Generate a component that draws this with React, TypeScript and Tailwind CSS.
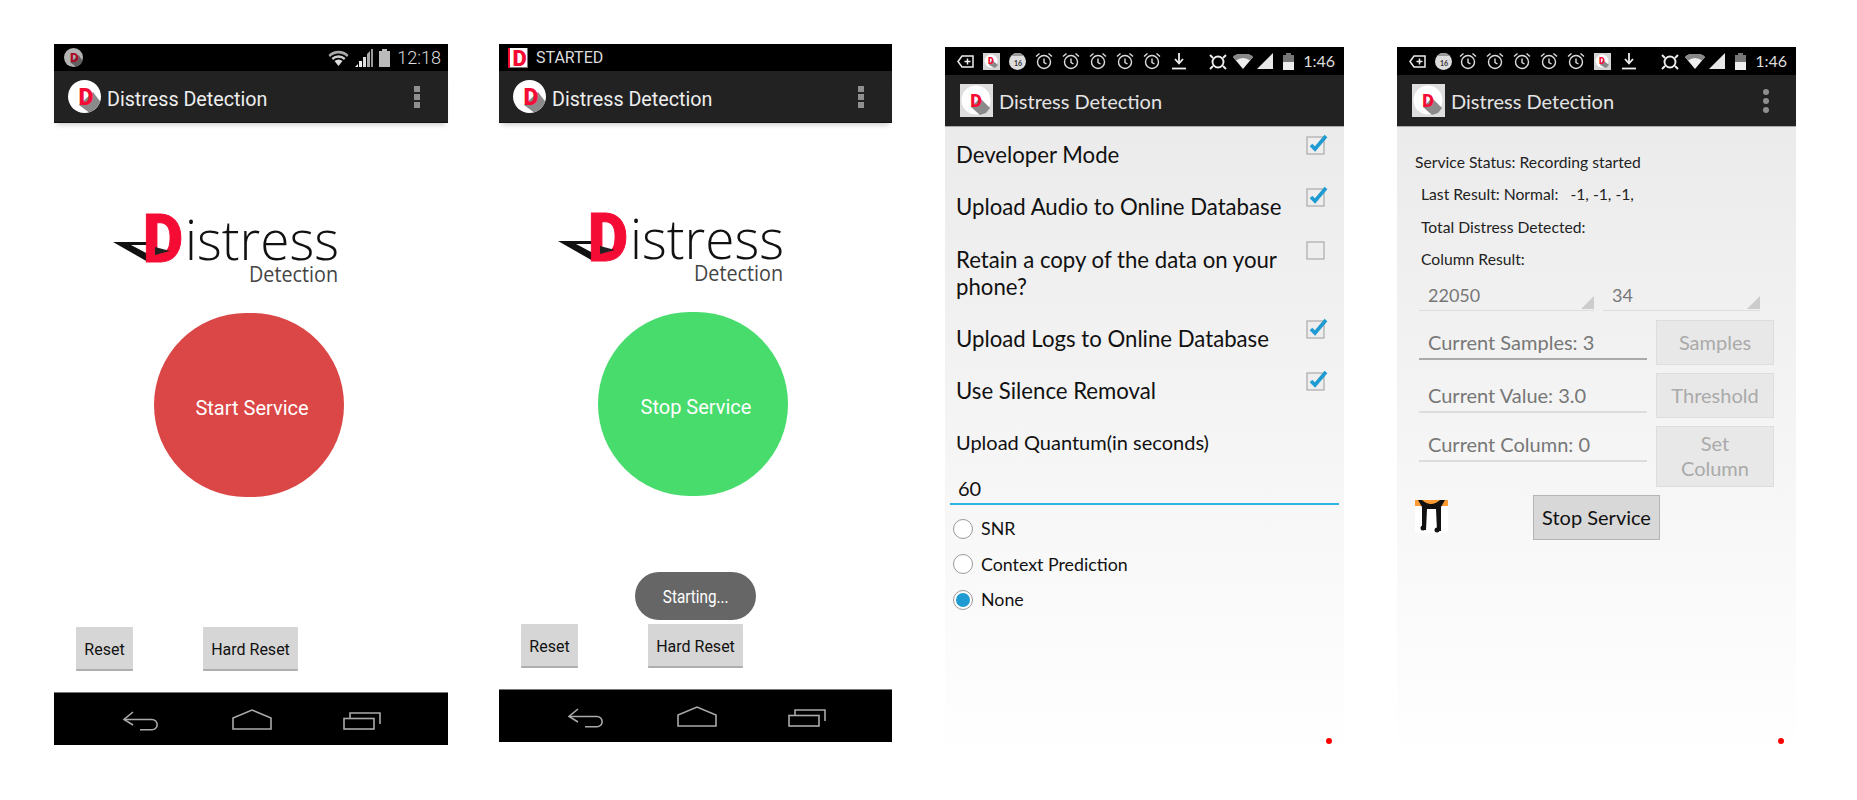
import type { ReactNode } from 'react';

const RoundIcon = ({ className = '' }: { className?: string }) => (
    <svg viewBox="0 0 33 33" className={className}>
        <circle cx="16.5" cy="16.5" r="16.5" fill="#fff" />
        <path d="M25 12 L32.2 21.5 A16.5 16.5 0 0 1 21 32.4 L11 25 Z" fill="#8a8a8a" />
        <text x="18" y="25" textAnchor="middle" fontSize="23" fontWeight="900" fill="#f50c35" className="font-['Roboto',sans-serif]">
            D
        </text>
    </svg>
);

const SquareIcon = ({ className = '' }: { className?: string }) => (
    <svg viewBox="0 0 33 33" className={className}>
        <rect width="33" height="33" fill="#dedede" />
        <circle cx="16" cy="16" r="14.5" fill="#fff" />
        <path d="M20 14 L30 24 L26 29 L20 31 L11 23 Z" fill="#8a8a8a" />
        <text x="16" y="23" textAnchor="middle" fontSize="18" fontWeight="900" fill="#f50c35" className="font-['Roboto',sans-serif]">
            D
        </text>
    </svg>
);

const StartedIcon = () => (
    <svg viewBox="0 0 20 20" className="w-5 h-5">
        <rect width="20" height="20" fill="#777" />
        <rect width="19" height="19" fill="#fff" />
        <rect x="0" width="2" height="20" fill="#f50c35" />
        <text x="11.5" y="18" textAnchor="middle" fontSize="22" fontWeight="900" fill="#f50c35" className="font-['Roboto',sans-serif]">
            D
        </text>
    </svg>
);

const Logo = ({ className = '' }: { className?: string }) => (
    <svg viewBox="0 0 240 75" className={`w-[240px] h-[75px] ${className}`}>
        <path d="M3 30 L38 30 L38 50 Z" fill="#111" />
        <path d="M21 33 L38 33 L38 42 Z" fill="#fff" />
        <text x="33" y="50" fontSize="66" fontWeight="900" fill="#f50c35" stroke="#f50c35" strokeWidth="1" textLength="40" lengthAdjust="spacingAndGlyphs" className="font-['Roboto',sans-serif]">
            D
        </text>
        <path d="M45 35 L60 39 L45 43 Z" fill="#222" />
        <text x="75" y="48" fontSize="55" fontWeight="300" fill="#111" textLength="154" lengthAdjust="spacingAndGlyphs" className="font-['Open_Sans',sans-serif]">
            istress
        </text>
        <text x="139" y="70" fontSize="21" fontWeight="400" fill="#444" textLength="89" lengthAdjust="spacingAndGlyphs" className="font-['Open_Sans',sans-serif]">
            Detection
        </text>
    </svg>
);

const WifiFan = () => (
    <svg viewBox="0 0 21 16" className="w-[21px] h-4">
        <path d="M0.5 5 A14 14 0 0 1 20.5 5 L19 7 A12 12 0 0 0 2 7 Z" fill="#aaa" />
        <path d="M3.5 8 A10 10 0 0 1 17.5 8 L16 10 A8 8 0 0 0 5 10 Z" fill="#ccc" />
        <path d="M6.5 11 A6 6 0 0 1 14.5 11 L10.5 16 Z" fill="#ddd" />
    </svg>
);

const SignalBars = () => (
    <svg viewBox="0 0 18 18" className="w-[18px] h-[18px]">
        <path d="M0 18 L3 15 V18 Z" fill="#eee" />
        <rect x="4" y="12" width="3" height="6" fill="#eee" />
        <rect x="8" y="8" width="3" height="10" fill="#ddd" />
        <path d="M12 5 L15 2 V18 H12 Z" fill="#aaa" />
        <rect x="16" y="0" width="2" height="18" fill="#999" />
    </svg>
);

const TopBar = ({ icon, title, titleClass = '', dots, className = '' }: { icon: ReactNode; title: string; titleClass?: string; dots: ReactNode; className?: string }) => (
    <div className={`h-[52px] bg-[#222222] flex items-center ${className}`}>
        {icon}
        <span className={`flex-1 ${titleClass}`}>{title}</span>
        {dots}
    </div>
);

const SquareDots = ({ className = '' }: { className?: string }) => (
    <div className={`flex flex-col gap-[2px] ${className}`}>
        <div className="w-1.5 h-1.5 bg-[#8f8f8f]" />
        <div className="w-1.5 h-1.5 bg-[#8f8f8f]" />
        <div className="w-1.5 h-1.5 bg-[#8f8f8f]" />
    </div>
);

const NavBar = () => (
    <div className="h-[53px] bg-black border-t border-[#777] flex items-start pl-[69px]">
        <svg viewBox="0 0 38 20" className="w-[38px] h-5 mt-[18px]" fill="none" stroke="#aaa" strokeWidth="1.6">
            <path d="M10 1 L1 8.5 L10 14" />
            <path d="M1 8.5 H29 A5 5 0 0 1 29 18.8 H17" />
        </svg>
        <svg viewBox="0 0 40 21" className="w-10 h-[21px] mt-4 ml-[71px]" fill="none" stroke="#aaa" strokeWidth="1.6">
            <path d="M1 20 V9 L20 1 L39 9 V20 Z" />
        </svg>
        <svg viewBox="0 0 38 19" className="w-[38px] h-[19px] mt-[18px] ml-[71px]" fill="none" stroke="#aaa" strokeWidth="1.6">
            <rect x="1" y="7.5" width="30" height="10.5" />
            <path d="M7 7 V2 H37 V13" />
        </svg>
    </div>
);

const GreyButton = ({ label, className = '' }: { label: string; className?: string }) => (
    <button className={`h-11 pt-1 bg-[#d6d6d6] border-b-2 border-[#aeaeae] rounded-[1px] text-[16px] text-[#111] font-['Roboto',sans-serif] ${className}`}>
        {label}
    </button>
);

const ServiceScreen = ({
    status,
    logoClass,
    label,
    circleClass,
    buttonsClass,
    heightClass,
    toast,
}: {
    status: ReactNode;
    logoClass: string;
    label: string;
    circleClass: string;
    buttonsClass: string;
    heightClass: string;
    toast?: boolean;
}) => (
    <div className={`relative flex flex-col bg-white font-['Roboto',sans-serif] ${heightClass}`}>
        <div className="h-[27px] bg-black flex items-center">{status}</div>
        <TopBar
            className="pl-3.5 text-[19.7px] text-[#eeeeee] shadow-[0_5px_5px_-3px_rgba(0,0,0,0.2)] border-b border-[#111]"
            titleClass="pt-1.5"
            icon={<RoundIcon className="w-[33px] h-[33px] mr-1.5" />}
            title="Distress Detection"
            dots={<SquareDots className="mr-7" />}
        />
        <Logo className={logoClass} />
        <div className={`w-[190px] h-[184px] rounded-full flex items-center justify-center pl-[6px] pt-[5px] text-white text-[20px] mt-[26px] ${circleClass}`}>
            {label}
        </div>
        {toast && (
            <div className="absolute left-[136px] top-[528px] w-[121px] h-12 rounded-full bg-[#666666] text-white text-[18px] flex items-center justify-center">
                <span className="scale-x-85">Starting...</span>
            </div>
        )}
        <div className={`flex pl-[22px] gap-[70px] ${buttonsClass}`}>
            <GreyButton label="Reset" className="w-[57px]" />
            <GreyButton label="Hard Reset" className="w-[95px]" />
        </div>
        <div className="mt-[21px]">
            <NavBar />
        </div>
    </div>
);

const TagIcon = () => (
    <svg viewBox="0 0 17 17" className="w-[17px] h-[17px]" fill="none" stroke="#eee" strokeWidth="1.5">
        <path d="M5 3 H16 V14 H5 L1 8.5 Z" />
        <path d="M10.5 5.5 V11.5 M7.5 8.5 H13.5" />
    </svg>
);

const BadgeIcon = () => (
    <svg viewBox="0 0 17 17" className="w-[17px] h-[17px]">
        <circle cx="8.5" cy="8.5" r="8.5" fill="#ddd" />
        <path d="M2 3 A8.5 8.5 0 0 1 15 3 Z" fill="#999" />
        <text x="9" y="13" textAnchor="middle" fontSize="7" fontWeight="700" fill="#333" className="font-['Lato',sans-serif]">
            16
        </text>
    </svg>
);

const ClockIcon = () => (
    <svg viewBox="0 0 18 18" className="w-[18px] h-[18px]" fill="none" stroke="#ddd" strokeWidth="1.4">
        <circle cx="9" cy="10" r="6.5" />
        <path d="M9 6.5 V10.5 L11.5 12" />
        <path d="M1 4.5 L4.5 1.5 M17 4.5 L13.5 1.5" />
    </svg>
);

const DownloadIcon = () => (
    <svg viewBox="0 0 18 18" className="w-[18px] h-[18px]" fill="none" stroke="#eee" strokeWidth="1.8">
        <path d="M9 1 V10" />
        <path d="M5 7 L9 11.5 L13 7" />
        <path d="M2 16.5 H16" />
    </svg>
);

const DIcon = () => (
    <svg viewBox="0 0 17 17" className="w-[17px] h-[17px]">
        <rect width="17" height="17" fill="#d4d4d4" />
        <circle cx="8" cy="8" r="6.5" fill="#fff" />
        <path d="M9 7 L15 12 L12 15 L6 12 Z" fill="#888" />
        <text x="8" y="11" textAnchor="middle" fontSize="9" fontWeight="900" fill="#f50c35" className="font-['Roboto',sans-serif]">
            D
        </text>
    </svg>
);

const StatusRight = () => (
    <div className="flex items-center ml-auto pr-[9px]">
        <svg viewBox="0 0 20 17" className="w-5 h-[17px]" fill="none" stroke="#eee" strokeWidth="1.9">
            <circle cx="10" cy="9" r="5.5" />
            <path d="M2 2 L5 5 M18 2 L15 5 M2 16 L5 13 M18 16 L15 13" />
        </svg>
        <svg viewBox="0 0 20 15" className="w-5 h-[15px] ml-[5px]">
            <path d="M0 3 A15 15 0 0 1 20 3 L10 15 Z" fill="#eee" />
            <path d="M0 3 A15 15 0 0 1 20 3 L17 6.5 A11 11 0 0 0 3 6.5 Z" fill="#888" />
        </svg>
        <svg viewBox="0 0 16 16" className="w-4 h-4 ml-1">
            <path d="M0 16 L16 0 V16 Z" fill="#e8e8e8" />
        </svg>
        <svg viewBox="0 0 11 17" className="w-[11px] h-[17px] ml-[10px]">
            <rect x="3" y="0" width="5" height="2" fill="#777" />
            <rect x="0" y="2" width="11" height="7" fill="#777" />
            <rect x="0" y="9" width="11" height="8" fill="#eee" />
        </svg>
        <span className="ml-[9px] text-[16px] leading-none text-[#dddddd]">1:46</span>
    </div>
);

const SettingsFrame = ({ icons, dots, children }: { icons: ReactNode; dots?: boolean; children: ReactNode }) => (
    <div className="relative h-[713px] flex flex-col font-['Lato',sans-serif]">
        <div className="h-7 bg-black flex items-center pl-3 gap-[9px]">
            {icons}
            <StatusRight />
        </div>
        <TopBar
            className="pl-[15px] text-[20px] text-[#e4e4e4] border-b border-[#aaa]"
            icon={<SquareIcon className="w-[33px] h-[33px] mr-1.5" />}
            title="Distress Detection"
            dots={
                dots ? (
                    <div className="flex flex-col gap-[3px] mr-[27px]">
                        <div className="w-1.5 h-1.5 rounded-full bg-[#8f8f8f]" />
                        <div className="w-1.5 h-1.5 rounded-full bg-[#8f8f8f]" />
                        <div className="w-1.5 h-1.5 rounded-full bg-[#8f8f8f]" />
                    </div>
                ) : null
            }
        />
        <div className="flex-1 bg-gradient-to-b from-[#ebebeb] to-white">{children}</div>
        <div className="absolute left-[381px] top-[691px] w-[6px] h-[6px] rounded-full bg-[#ff0000]" />
    </div>
);

const CheckBox = ({ checked }: { checked: boolean }) => (
    <svg viewBox="0 0 20 20" className="w-5 h-5 -mt-[7px] shrink-0 overflow-visible">
        <rect x="1" y="3" width="17" height="17" fill="#eeeeee" stroke="#aaa" strokeWidth="1.2" />
        {checked && <path d="M5 11 L9 15 L20 2" fill="none" stroke="#1f9bd1" strokeWidth="3.6" />}
    </svg>
);

const CheckRow = ({ label, checked, className }: { label: string; checked: boolean; className: string }) => (
    <div className={`flex justify-between items-start pl-[11px] pr-[18px] text-[22.2px] leading-[27px] text-[#111] ${className}`}>
        <span className="w-[330px]">{label}</span>
        <CheckBox checked={checked} />
    </div>
);

const RadioRow = ({ label, checked }: { label: string; checked?: boolean }) => (
    <div className="h-[35.5px] flex items-center pl-2 text-[17.8px] text-[#111]">
        <div className="w-5 h-5 rounded-full border border-[#999] bg-white flex items-center justify-center mr-[8px]">
            {checked && <div className="w-3.5 h-3.5 rounded-full bg-[#1f9bd1]" />}
        </div>
        {label}
    </div>
);

const SettingsScreen = () => (
    <SettingsFrame
        icons={
            <>
                <TagIcon />
                <DIcon />
                <BadgeIcon />
                <ClockIcon />
                <ClockIcon />
                <ClockIcon />
                <ClockIcon />
                <ClockIcon />
                <DownloadIcon />
            </>
        }
    >
        <div className="pt-[14px]">
            <CheckRow label="Developer Mode" checked className="h-[52px]" />
            <CheckRow label="Upload Audio to Online Database" checked className="h-[53px]" />
            <CheckRow label="Retain a copy of the data on your phone?" checked={false} className="h-[79px]" />
            <CheckRow label="Upload Logs to Online Database" checked className="h-[52px]" />
            <CheckRow label="Use Silence Removal" checked className="h-[52px]" />
            <div className="pl-[11px] text-[20px] leading-[27px] text-[#111] h-[46px]">Upload Quantum(in seconds)</div>
            <div className="mx-[5px] h-[30px] border-b-2 border-[#29b6e0] pl-[8px] text-[20px] leading-[27px] text-[#111]">60</div>
            <div className="mt-[6px]">
                <RadioRow label="SNR" />
                <RadioRow label="Context Prediction" />
                <RadioRow label="None" checked />
            </div>
        </div>
    </SettingsFrame>
);

const Spinner = ({ value, className }: { value: string; className: string }) => (
    <div className={`relative h-[35px] border-b border-[#dddddd] pl-[9px] pt-[7px] text-[18px] leading-[24px] text-[#777] ${className}`}>
        {value}
        <div className="absolute right-0 bottom-[1px] w-0 h-0 border-l-[13px] border-b-[13px] border-l-transparent border-b-[#cccccc]" />
    </div>
);

const ValueInput = ({ label, className }: { label: string; className: string }) => (
    <div className={`w-[228px] flex items-end pl-[9px] pb-1 text-[20px] leading-6 text-[#777] ${className}`}>{label}</div>
);

const DisabledButton = ({ label, className }: { label: string; className: string }) => (
    <button className={`w-[118px] bg-[#e8e8e8] border border-[#dddddd] text-[20px] leading-[25px] text-[#aaaaaa] ${className}`}>{label}</button>
);

const StatusScreen = () => (
    <SettingsFrame
        dots
        icons={
            <>
                <TagIcon />
                <BadgeIcon />
                <div className="-ml-0.5 flex gap-[9px]">
                    <ClockIcon />
                    <ClockIcon />
                    <ClockIcon />
                    <ClockIcon />
                    <ClockIcon />
                </div>
                <DIcon />
                <DownloadIcon />
            </>
        }
    >
        <div className="pt-[19px] text-[15.7px] leading-[32.4px] text-[#222]">
            <div className="pl-[18px]">Service Status: Recording started</div>
            <div className="pl-6">Last Result: Normal: &nbsp; -1, -1, -1,</div>
            <div className="pl-6">Total Distress Detected:</div>
            <div className="pl-6">Column Result:</div>
        </div>
        <div className="flex gap-[9px] ml-[22px]">
            <Spinner value="22050" className="w-[175px]" />
            <Spinner value="34" className="w-[157px]" />
        </div>
        <div className="flex flex-col gap-2 ml-[22px] mt-[9px]">
            <div className="flex items-start gap-[9px]">
                <ValueInput label="Current Samples: 3" className="h-10 border-b-2 border-[#aaaaaa]" />
                <DisabledButton label="Samples" className="h-[45px]" />
            </div>
            <div className="flex items-start gap-[9px]">
                <ValueInput label="Current Value: 3.0" className="h-10 border-b-2 border-[#dddddd]" />
                <DisabledButton label="Threshold" className="h-[45px]" />
            </div>
            <div className="flex items-start gap-[9px]">
                <ValueInput label="Current Column: 0" className="h-9 border-b-2 border-[#dddddd]" />
                <DisabledButton label="Set Column" className="h-[61px] px-6" />
            </div>
        </div>
        <div className="flex items-start ml-[18px] mt-2">
            <svg viewBox="0 0 33 33" className="w-[33px] h-[33px] mt-[5px]">
                <rect width="33" height="33" fill="#fff" />
                <rect width="33" height="6" fill="#fb9b33" />
                <path d="M3 0 H7 Q16 8 25 0 H30 L26 7 V31 H22 L21 9 H12 L11 30 H7 L7 7 Z" fill="#111" />
                <circle cx="8" cy="28" r="2.5" fill="#111" />
                <circle cx="22" cy="30" r="2.5" fill="#111" />
            </svg>
            <button className="ml-[85px] w-[127px] h-[45px] bg-[#d8d8d8] border border-[#b5b5b5] text-[20px] text-[#111]">Stop Service</button>
        </div>
    </SettingsFrame>
);

export default function App() {
    return (
        <div className="w-[1857px] h-[800px] bg-white flex items-start pl-[54px] pt-[44px] overflow-hidden">
            <div className="w-[394px] shrink-0">
                <ServiceScreen
                    heightClass="h-[701px]"
                    logoClass="ml-[56px] mt-[89px]"
                    label="Start Service"
                    circleClass="ml-[100px] bg-[#db4646]"
                    buttonsClass="mt-[130px]"
                    status={
                        <>
                            <RoundIcon className="w-[19px] h-[19px] ml-2.5 opacity-70" />
                            <div className="ml-auto flex items-center pr-[7px]">
                                <WifiFan />
                                <div className="ml-1.5">
                                    <SignalBars />
                                </div>
                                <svg viewBox="0 0 11 18" className="w-[11px] h-[18px] ml-1.5">
                                    <rect x="3" y="0" width="5" height="2" fill="#bbb" />
                                    <rect x="0" y="2" width="11" height="16" fill="#bbb" />
                                </svg>
                                <span className="ml-[7px] text-[18px] font-light leading-none text-[#dddddd]">12:18</span>
                            </div>
                        </>
                    }
                />
            </div>
            <div className="w-[393px] shrink-0 ml-[51px]">
                <ServiceScreen
                    toast
                    heightClass="h-[698px]"
                    logoClass="ml-[56px] mt-[88px]"
                    label="Stop Service"
                    circleClass="ml-[99px] bg-[#47dc6c]"
                    buttonsClass="mt-[128px]"
                    status={
                        <>
                            <div className="ml-[9px] mr-2 flex">
                                <StartedIcon />
                            </div>
                            <span className="text-[16px] text-[#dddddd]">STARTED</span>
                        </>
                    }
                />
            </div>
            <div className="w-[399px] shrink-0 ml-[53px] mt-[3px]">
                <SettingsScreen />
            </div>
            <div className="w-[399px] shrink-0 ml-[53px] mt-[3px]">
                <StatusScreen />
            </div>
        </div>
    );
}
